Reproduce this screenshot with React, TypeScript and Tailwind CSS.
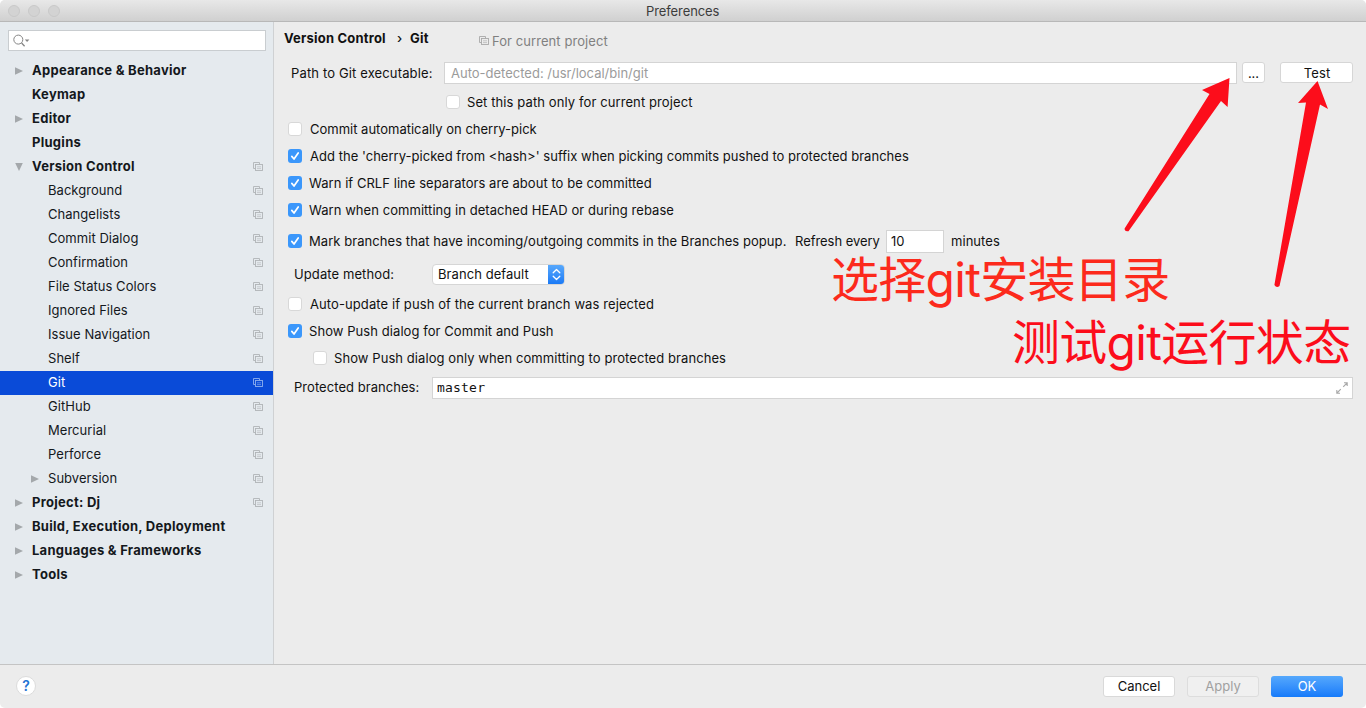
import React from "react";
import clsx from "clsx";

function CopyIcon({ className }: { className: string }) {
  return (
    <svg width="10" height="10" viewBox="0 0 10 10" fill="none" stroke="currentColor" className={className}>
      <path d="M2.5 6.5H0.5V0.5H6.5V2.5" strokeWidth="0.9" />
      <rect x="2.5" y="2.5" width="7" height="6" strokeWidth="0.9" />
      <path d="M4 4.8H8M4 6.6H8" strokeWidth="0.6" />
    </svg>
  );
}

type Node = {
  label: string;
  bold?: boolean;
  child?: boolean;
  arrow?: "right" | "down";
  scoped?: boolean;
  selected?: boolean;
};

const nodes: Node[] = [
  { label: "Appearance & Behavior", bold: true, arrow: "right" },
  { label: "Keymap", bold: true },
  { label: "Editor", bold: true, arrow: "right" },
  { label: "Plugins", bold: true },
  { label: "Version Control", bold: true, arrow: "down", scoped: true },
  { label: "Background", child: true, scoped: true },
  { label: "Changelists", child: true, scoped: true },
  { label: "Commit Dialog", child: true, scoped: true },
  { label: "Confirmation", child: true, scoped: true },
  { label: "File Status Colors", child: true, scoped: true },
  { label: "Ignored Files", child: true, scoped: true },
  { label: "Issue Navigation", child: true, scoped: true },
  { label: "Shelf", child: true, scoped: true },
  { label: "Git", child: true, scoped: true, selected: true },
  { label: "GitHub", child: true, scoped: true },
  { label: "Mercurial", child: true, scoped: true },
  { label: "Perforce", child: true, scoped: true },
  { label: "Subversion", child: true, arrow: "right", scoped: true },
  { label: "Project: Dj", bold: true, arrow: "right", scoped: true },
  { label: "Build, Execution, Deployment", bold: true, arrow: "right" },
  { label: "Languages & Frameworks", bold: true, arrow: "right" },
  { label: "Tools", bold: true, arrow: "right" },
];

function TreeRow({ node }: { node: Node }) {
  return (
    <div
      className={clsx(
        "flex h-6 shrink-0 items-center pr-[10px]",
        node.child ? "pl-[30px]" : "pl-[14px]",
        node.selected ? "bg-[#0a4bd8] text-white" : "text-[#14181c]",
      )}
    >
      <span className="flex w-[18px] shrink-0 items-center text-[#a4a8ab]">
        {node.arrow && (
          <svg width="10" height="10" viewBox="0 0 10 10" fill="currentColor">
            <path d={node.arrow === "right" ? "M1 1.2L9 5L1 8.8Z" : "M1.2 1L5 9L8.8 1Z"} />
          </svg>
        )}
      </span>
      <span className={clsx("grow whitespace-nowrap pb-[2px]", node.bold ? "font-bold tracking-[0.27px]" : "tracking-[0.04px]")}>
        {node.label}
      </span>
      {node.scoped && <CopyIcon className={node.selected ? "text-[#8fb0ee]" : "text-[#b0b4b7]"} />}
    </div>
  );
}

function Check({ on }: { on?: boolean }) {
  return on ? (
    <span className="flex size-[14px] shrink-0 items-center justify-center rounded-[3px] bg-[#3b97fb]">
      <svg width="14" height="14" viewBox="0 0 14 14" fill="none" stroke="white" strokeWidth="1.7" strokeLinecap="round" strokeLinejoin="round">
        <path d="M3.8 7.4L6 10L10.2 3.9" />
      </svg>
    </span>
  ) : (
    <span className="size-[14px] shrink-0 rounded-[3px] border border-[#d8d8d8] bg-white" />
  );
}

function Option({ on, label, className }: { on?: boolean; label: string; className: string }) {
  return (
    <div className={clsx("flex shrink-0 items-center whitespace-nowrap", className)}>
      <Check on={on} />
      <span>{label}</span>
    </div>
  );
}

export default function App() {
  return (
    <div className="relative flex h-[708px] w-[1366px] flex-col overflow-hidden rounded-[5px] bg-[#ececec] font-[Inter,'Liberation_Sans',sans-serif] text-[13px] leading-4 text-[#111]">
      <header className="flex h-[22px] shrink-0 items-center border-b border-[#b8b8b8] bg-linear-to-b from-[#e8e8e8] to-[#d0d0d0]">
        <div className="flex w-[646px] gap-2 pl-2">
          <span className="size-3 rounded-full border border-[#c8c8c8] bg-[#d3d3d3]" />
          <span className="size-3 rounded-full border border-[#c8c8c8] bg-[#d3d3d3]" />
          <span className="size-3 rounded-full border border-[#c8c8c8] bg-[#d3d3d3]" />
        </div>
        <span className="pt-px tracking-[-0.1px] text-[#3c3c3c]">Preferences</span>
      </header>

      <div className="flex h-[642px] shrink-0">
        <aside className="flex w-[274px] shrink-0 flex-col border-r border-[#cfd1d3] bg-[#e5eaee]">
          <div className="mt-2 mb-2 ml-2 flex h-[21px] w-[258px] shrink-0 items-center border border-[#c9cdd0] bg-white pl-1">
            <svg width="18" height="14" viewBox="0 0 18 14" fill="none" stroke="#858585" strokeWidth="1">
              <circle cx="5.3" cy="5.6" r="4.5" />
              <path d="M8.6 9L11.6 12.2" strokeWidth="1.3" />
              <path d="M11.8 5.5H16.4L14.1 8Z" fill="#858585" stroke="none" />
            </svg>
          </div>
          <nav className="flex flex-col">
            {nodes.map((n) => (
              <TreeRow key={n.label} node={n} />
            ))}
          </nav>
        </aside>

        <main className="flex grow flex-col">
          <div className="flex h-[37px] shrink-0 items-center whitespace-nowrap pl-[10px]">
            <div className="flex w-[195px] items-center pb-[5px] font-bold tracking-[0.2px]">
              <span className="w-[113px]">Version Control</span>
              <span className="w-[13px] font-medium">›</span>
              <span>Git</span>
            </div>
            <div className="flex items-center gap-[3px] pt-px tracking-[0.07px] text-[#808080]">
              <CopyIcon className="text-[#a8a8a8]" />
              <span>For current project</span>
            </div>
          </div>

          <div className="flex h-[29px] shrink-0 items-center whitespace-nowrap pb-[2px] pl-[17px]">
            <span className="w-[153px] tracking-[0.14px]">Path to Git executable:</span>
            <div className="flex h-[22px] w-[793px] items-center border border-[#d4d4d4] bg-white pl-[6px] text-[#9b9b9b]">Auto-detected: /usr/local/bin/git</div>
            <button className="ml-[5px] flex h-[21px] w-[23px] items-center justify-center rounded-[3px] border border-[#d6d6d6] bg-white">...</button>
            <button className="ml-[15px] flex h-[21px] w-[73px] items-center justify-center rounded-[3px] border border-[#d6d6d6] bg-white pl-px tracking-[0.15px]">Test</button>
          </div>

          <Option label="Set this path only for current project" className="h-[28px] gap-[7px] pl-[172px] tracking-[0.1px]" />
          <Option label="Commit automatically on cherry-pick" className="h-[27px] gap-2 pb-[2px] pl-[14px]" />
          <Option on label="Add the 'cherry-picked from <hash>' suffix when picking commits pushed to protected branches" className="h-[27px] gap-2 pb-[2px] pl-[14px] tracking-[0.028px]" />
          <Option on label="Warn if CRLF line separators are about to be committed" className="h-[27px] gap-[7px] pb-[2px] pl-[14px] tracking-[0.05px]" />
          <Option on label="Warn when committing in detached HEAD or during rebase" className="h-[27px] gap-[7px] pb-[2px] pl-[14px] tracking-[0.055px]" />

          <div className="flex h-[35px] shrink-0 items-center whitespace-nowrap">
            <Option on label="Mark branches that have incoming/outgoing commits in the Branches popup." className="w-[521px] gap-[7px] pb-[2px] pl-[14px] tracking-[0.06px]" />
            <span className="w-[91px] pb-[2px] tracking-[-0.05px]">Refresh every</span>
            <div className="flex h-[23px] w-[58px] items-center border border-[#d4d4d4] bg-white pb-px pl-1">10</div>
            <span className="ml-[7px] pb-[2px] tracking-[0.05px]">minutes</span>
          </div>

          <div className="flex h-[31px] shrink-0 items-center whitespace-nowrap pl-5">
            <span className="w-[138px] pb-[2px] tracking-[0.1px]">Update method:</span>
            <div className="flex h-[21px] w-[133px] items-center overflow-hidden rounded-[4px] border border-[#d6d6d6] bg-white pl-[5px]">
              <span className="grow pb-[2px] tracking-[0.07px]">Branch default</span>
              <span className="-my-px -mr-px flex h-[21px] w-[17px] items-center justify-center bg-linear-to-b from-[#5aaafc] to-[#1577f5]">
                <svg width="9" height="13" viewBox="0 0 9 13" fill="none" stroke="white" strokeWidth="1.3" strokeLinecap="round" strokeLinejoin="round">
                  <path d="M1.2 4.8L4.5 1.5L7.8 4.8M1.2 8.2L4.5 11.5L7.8 8.2" />
                </svg>
              </span>
            </div>
          </div>

          <Option label="Auto-update if push of the current branch was rejected" className="h-[28px] gap-2 pl-[14px] tracking-[0.095px]" />
          <Option on label="Show Push dialog for Commit and Push" className="h-[27px] gap-[7px] pb-[2px] pl-[14px] tracking-[0.07px]" />
          <Option label="Show Push dialog only when committing to protected branches" className="h-[27px] gap-[7px] pb-[2px] pl-[39px] tracking-[0.075px]" />

          <div className="flex h-[31px] shrink-0 items-center whitespace-nowrap pl-5">
            <span className="w-[138px] pb-[2px] tracking-[0.05px]">Protected branches:</span>
            <div className="flex h-[22px] w-[921px] items-center justify-between border border-[#d4d4d4] bg-white pr-1 pl-1">
              <span className="font-['DejaVu_Sans_Mono',monospace] tracking-[0.2px]">master</span>
              <svg width="12" height="12" viewBox="0 0 12 12" fill="none" stroke="#a8a8a8" strokeWidth="1.1">
                <path d="M7.2 4.8L11 1M8 0.8H11.2V4M4.8 7.2L1 11M0.8 8V11.2H4" />
              </svg>
            </div>
          </div>
        </main>
      </div>

      <footer className="flex h-11 shrink-0 items-center border-t border-[#c4c4c4] pr-[23px] pb-px pl-4">
        <button className="flex size-5 items-center justify-center rounded-full border border-[#dcdcdc] bg-white text-[14px] font-semibold text-[#2474d4]">?</button>
        <div className="ml-auto flex gap-3">
          <button className="flex h-[21px] w-[72px] items-center justify-center rounded-[3px] border border-[#d9d9d9] bg-white pb-px">Cancel</button>
          <button className="flex h-[21px] w-[72px] items-center justify-center rounded-[3px] border border-[#dddddd] bg-[#f0f0f0] pb-px text-[#a0a0a0]">Apply</button>
          <button className="flex h-[21px] w-[72px] items-center justify-center rounded-[3px] bg-linear-to-b from-[#55a8fc] to-[#147afa] pb-px text-white">OK</button>
        </div>
      </footer>

      <svg width="266" height="250" viewBox="1100 50 266 250" fill="#fc0d1b" className="absolute top-[50px] left-[1100px]">
        <path d="M1229.500 78L1202 90L1209.500 94L1124.600 228.600Q1124.500 232 1128.500 231.200L1221 101L1227.600 107Z" />
        <path d="M1317.500 81L1298 103L1306 102.500L1274.400 285Q1276.500 288.500 1279.500 286L1320 104.500L1328 109Z" />
      </svg>
      <div className="absolute top-[252px] left-[831px] whitespace-nowrap font-[Inter,'Noto_Sans_CJK_SC',sans-serif] text-[48px] leading-[56px] tracking-[-0.7px] text-[#fc2a1c]">选择git安装目录</div>
      <div className="absolute top-[315px] left-[1012px] whitespace-nowrap font-[Inter,'Noto_Sans_CJK_SC',sans-serif] text-[48px] leading-[56px] tracking-[-0.7px] text-[#fc0d1b]">测试git运行状态</div>
    </div>
  );
}
